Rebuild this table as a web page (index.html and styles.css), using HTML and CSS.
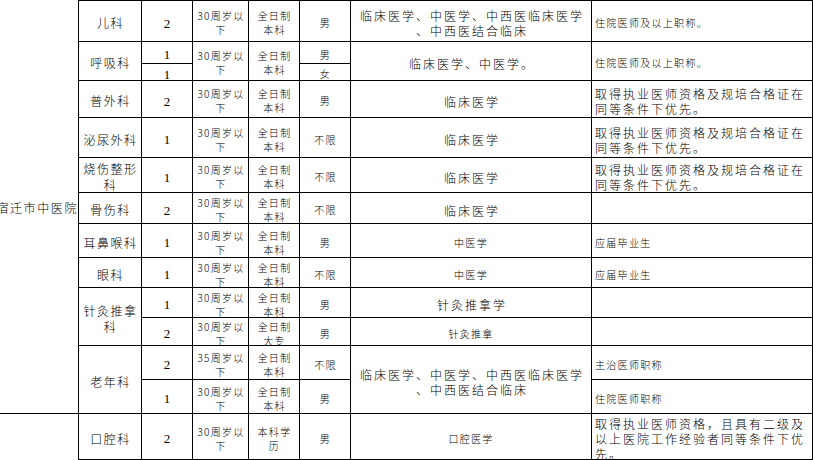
FILE: index.html
```html
<!DOCTYPE html>
<html lang="zh-CN">
<head>
<meta charset="utf-8">
<title>宿迁市中医院 招聘岗位</title>
<link rel="stylesheet" href="styles.css">
</head>
<body>
<div class="sheet">
  <!-- row 1 -->
  <div class="org rs13"><span>宿迁市中医院</span></div>
  <div class="c dept">儿科</div>
  <div class="c num">2</div>
  <div class="c med">30周岁以<br>下</div>
  <div class="c med">全日制<br>本科</div>
  <div class="c med">男</div>
  <div class="c big">临床医学、中医学、中西医临床医学<br>、中西医结合临床</div>
  <div class="c sm lf">住院医师及以上职称。</div>
  <!-- rows 2-3 -->
  <div class="c dept rs2">呼吸科</div>
  <div class="c num">1</div>
  <div class="c med rs2">30周岁以<br>下</div>
  <div class="c med rs2">全日制<br>本科</div>
  <div class="c med">男</div>
  <div class="c big rs2">临床医学、中医学。</div>
  <div class="c sm lf rs2">住院医师及以上职称。</div>
  <div class="c num">1</div>
  <div class="c med">女</div>
  <!-- row 4 -->
  <div class="c dept">普外科</div>
  <div class="c num">2</div>
  <div class="c med">30周岁以<br>下</div>
  <div class="c med">全日制<br>本科</div>
  <div class="c med">男</div>
  <div class="c big">临床医学</div>
  <div class="c big lf">取得执业医师资格及规培合格证在<br>同等条件下优先。</div>
  <!-- row 5 -->
  <div class="c dept">泌尿外科</div>
  <div class="c num">1</div>
  <div class="c med">30周岁以<br>下</div>
  <div class="c med">全日制<br>本科</div>
  <div class="c med">不限</div>
  <div class="c big">临床医学</div>
  <div class="c big lf">取得执业医师资格及规培合格证在<br>同等条件下优先。</div>
  <!-- row 6 -->
  <div class="c dept">烧伤整形<br>科</div>
  <div class="c num">1</div>
  <div class="c med">30周岁以<br>下</div>
  <div class="c med">全日制<br>本科</div>
  <div class="c med">不限</div>
  <div class="c big">临床医学</div>
  <div class="c big lf">取得执业医师资格及规培合格证在<br>同等条件下优先。</div>
  <!-- row 7 -->
  <div class="c dept">骨伤科</div>
  <div class="c num">2</div>
  <div class="c med">30周岁以<br>下</div>
  <div class="c med">全日制<br>本科</div>
  <div class="c med">不限</div>
  <div class="c big">临床医学</div>
  <div class="c"></div>
  <!-- row 8 -->
  <div class="c dept">耳鼻喉科</div>
  <div class="c num">1</div>
  <div class="c med">30周岁以<br>下</div>
  <div class="c med">全日制<br>本科</div>
  <div class="c med">男</div>
  <div class="c sm">中医学</div>
  <div class="c sm lf">应届毕业生</div>
  <!-- row 9 -->
  <div class="c dept">眼科</div>
  <div class="c num">1</div>
  <div class="c med">30周岁以<br>下</div>
  <div class="c med">全日制<br>本科</div>
  <div class="c med">不限</div>
  <div class="c sm">中医学</div>
  <div class="c sm lf">应届毕业生</div>
  <!-- rows 10-11 -->
  <div class="c dept rs2">针灸推拿<br>科</div>
  <div class="c num">1</div>
  <div class="c med">30周岁以<br>下</div>
  <div class="c med">全日制<br>本科</div>
  <div class="c med">男</div>
  <div class="c big">针灸推拿学</div>
  <div class="c"></div>
  <div class="c num">2</div>
  <div class="c med">30周岁以<br>下</div>
  <div class="c med">全日制<br>大专</div>
  <div class="c med">男</div>
  <div class="c sm">针灸推拿</div>
  <div class="c"></div>
  <!-- rows 12-13 -->
  <div class="c dept rs2">老年科</div>
  <div class="c num">2</div>
  <div class="c med">35周岁以<br>下</div>
  <div class="c med">全日制<br>本科</div>
  <div class="c med">不限</div>
  <div class="c big rs2">临床医学、中医学、中西医临床医学<br>、中西医结合临床</div>
  <div class="c sm lf">主治医师职称</div>
  <div class="c num">1</div>
  <div class="c med">30周岁以<br>下</div>
  <div class="c med">全日制<br>本科</div>
  <div class="c med">男</div>
  <div class="c sm lf">住院医师职称</div>
  <!-- row 14 -->
  <div class="org top"></div>
  <div class="c dept bot">口腔科</div>
  <div class="c num bot">2</div>
  <div class="c med bot">30周岁以<br>下</div>
  <div class="c med bot">本科学<br>历</div>
  <div class="c med bot">男</div>
  <div class="c sm bot">口腔医学</div>
  <div class="c big lf bot">取得执业医师资格，且具有二级及<br>以上医院工作经验者同等条件下优<br>先。</div>
</div>
</body>
</html>
```

FILE: styles.css
```css
html, body {
  margin: 0;
  padding: 0;
  background: #ffffff;
}

body {
  font-family: "Noto Sans CJK SC", "Noto Sans", sans-serif;
  font-weight: 300;
  color: #000000;
  overflow: hidden;
}

.sheet {
  display: grid;
  grid-template-columns: 78px 63px 51px 56px 51px 51px 241px 221px;
  grid-template-rows: 41px 22px 17px 37px 40px 35px 31px 34px 30px 30px 28px 34px 34px 47px;
  width: 812px;
  border-right: 1px solid #000;
}

.org {
  display: flex;
  align-items: center;
  justify-content: flex-end;
  overflow: hidden;
  white-space: nowrap;
  font-size: 12px;
  letter-spacing: 1.6px;
  line-height: 14px;
  padding-top: 2px;
}

.org.top {
  border-top: 1px solid #000;
}

.c {
  box-sizing: border-box;
  display: flex;
  align-items: center;
  justify-content: center;
  text-align: center;
  overflow: hidden;
  border-top: 1px solid #000;
  border-left: 1px solid #000;
  white-space: nowrap;
  padding-top: 4px;
}

.bot {
  border-bottom: 1px solid #000;
}

.rs2 { grid-row: span 2; }
.rs13 { grid-row: span 13; }

.dept {
  font-size: 12px;
  letter-spacing: 1.5px;
  line-height: 16px;
  padding-left: 1px;
}

.num {
  font-family: "Liberation Serif", "Times New Roman", serif;
  font-weight: 400;
  font-size: 13px;
  line-height: 15px;
}

.med {
  font-size: 10px;
  letter-spacing: 1.3px;
  line-height: 14px;
  padding-left: 1px;
}

.big {
  font-size: 12px;
  letter-spacing: 2px;
  line-height: 15px;
  padding-left: 2px;
}

.sm {
  font-size: 10px;
  letter-spacing: 1.3px;
  line-height: 14px;
}

.lf {
  justify-content: flex-start;
  text-align: left;
  padding-left: 3px;
}
```
